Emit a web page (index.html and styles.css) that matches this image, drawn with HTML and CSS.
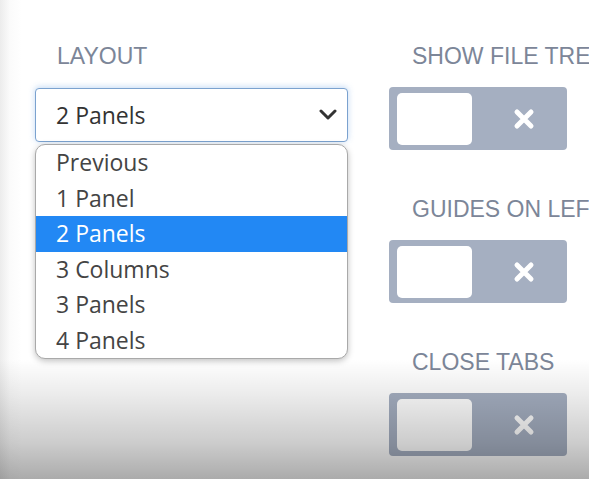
FILE: index.html
```html
<!DOCTYPE html>
<html lang="en">
<head>
    <meta charset="UTF-8">
    <title>Settings</title>
    <link rel="stylesheet" href="styles.css">
</head>
<body>
    <div class="settings">
        <div class="col col-left">
            <div class="label">LAYOUT</div>
            <div class="select-wrap">
                <div class="select">
                    <span>2 Panels</span>
                    <svg class="chevron" width="18" height="12" viewBox="0 0 18 12">
                        <path d="M2 2 L9 9 L16 2" fill="none" stroke="#333" stroke-width="3" stroke-linecap="round" stroke-linejoin="round"/>
                    </svg>
                </div>
                <ul class="options">
                    <li>Previous</li>
                    <li>1 Panel</li>
                    <li class="selected">2 Panels</li>
                    <li>3 Columns</li>
                    <li>3 Panels</li>
                    <li>4 Panels</li>
                </ul>
            </div>
        </div>

        <div class="col col-right">
            <div class="field">
                <div class="label">SHOW FILE TREE</div>
                <div class="toggle">
                    <div class="knob"></div>
                    <svg class="cross" width="22" height="22" viewBox="0 0 22 22">
                        <path d="M4 4 L18 18 M18 4 L4 18" stroke="#fff" stroke-width="5" stroke-linecap="round"/>
                    </svg>
                </div>
            </div>
            <div class="field">
                <div class="label">GUIDES ON LEFT</div>
                <div class="toggle">
                    <div class="knob"></div>
                    <svg class="cross" width="22" height="22" viewBox="0 0 22 22">
                        <path d="M4 4 L18 18 M18 4 L4 18" stroke="#fff" stroke-width="5" stroke-linecap="round"/>
                    </svg>
                </div>
            </div>
            <div class="field">
                <div class="label">CLOSE TABS</div>
                <div class="toggle">
                    <div class="knob"></div>
                    <svg class="cross" width="22" height="22" viewBox="0 0 22 22">
                        <path d="M4 4 L18 18 M18 4 L4 18" stroke="#fff" stroke-width="5" stroke-linecap="round"/>
                    </svg>
                </div>
            </div>
        </div>
    </div>

    <div class="fade"></div>
</body>
</html>
```

FILE: styles.css
```css
html, body {
    margin: 0;
    height: 100%;
    overflow: hidden;
}
body {
    background: linear-gradient(to right, #ececec 0, #fbfbfb 10px, #ffffff 22px);
    font-family: "Liberation Sans", Arial, sans-serif;
    position: relative;
}
.settings {
    display: flex;
    gap: 41px;
    padding: 43px 0 0 35px;
}
.col {
    display: flex;
    flex-direction: column;
}
.col-left {
    width: 313px;
    flex-shrink: 0;
}
.col-right {
    width: 178px;
    flex-shrink: 0;
    gap: 46px;
}
.label {
    font-size: 23px;
    line-height: 26px;
    color: #7c8698;
    padding-left: 22px;
    margin-bottom: 19px;
    white-space: nowrap;
}
.field .label {
    padding-left: 23px;
    margin-bottom: 18px;
}
.select-wrap {
    position: relative;
}
.select {
    height: 54px;
    box-sizing: border-box;
    border: 1px solid #7ba2cf;
    border-radius: 4px;
    box-shadow: 0 -1px 6px rgba(120, 170, 230, 0.45);
    background: #fff;
    display: flex;
    align-items: center;
    justify-content: space-between;
    padding: 0 8px 0 20px;
    font-family: "Open Sans", sans-serif;
    font-size: 23px;
    color: #333;
}
.chevron {
    margin-right: 2px;
}
.options {
    position: absolute;
    top: 56px;
    left: 0;
    right: 0;
    margin: 0;
    padding: 0;
    list-style: none;
    background: #fff;
    border: 1px solid #a9a9a9;
    border-radius: 10px;
    box-shadow: 0 2px 6px rgba(0, 0, 0, 0.25);
    overflow: hidden;
    font-family: "Open Sans", sans-serif;
    font-size: 23px;
    color: #444;
}
.options li {
    height: 35.5px;
    line-height: 35.5px;
    padding-left: 20px;
}
.options li.selected {
    background: #2288f4;
    color: #fff;
}
.toggle {
    height: 63px;
    background: #a5afc1;
    border-radius: 4px;
    display: flex;
    align-items: center;
    padding: 0 8px;
}
.knob {
    width: 75px;
    height: 52px;
    background: #fff;
    border-radius: 5px;
}
.cross {
    margin-left: 41px;
}
.fade {
    position: absolute;
    left: 0;
    right: 0;
    bottom: 0;
    height: 120px;
    background: linear-gradient(to bottom, rgba(0, 0, 0, 0) 0, rgba(0, 0, 0, 0.08) 30%, rgba(0, 0, 0, 0.2) 70%, rgba(0, 0, 0, 0.33) 100%);
    pointer-events: none;
}
```
